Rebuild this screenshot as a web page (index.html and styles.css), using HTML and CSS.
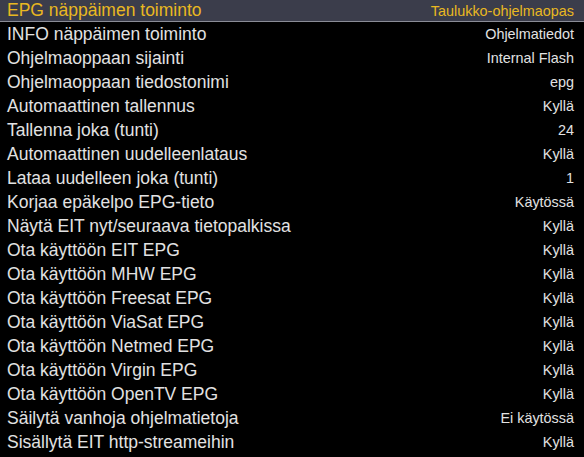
FILE: index.html
```html
<!DOCTYPE html>
<html>

<head>
    <meta name="viewport" content="width=device-width, initial-scale=1.0">
    <link rel="stylesheet" href="styles.css">
</head>

<body>
    <div class="menu">
        <div class="row selected"><span class="label">EPG näppäimen toiminto</span><span class="value">Taulukko-ohjelmaopas</span></div>
        <div class="row"><span class="label">INFO näppäimen toiminto</span><span class="value">Ohjelmatiedot</span></div>
        <div class="row"><span class="label">Ohjelmaoppaan sijainti</span><span class="value">Internal Flash</span></div>
        <div class="row"><span class="label">Ohjelmaoppaan tiedostonimi</span><span class="value">epg</span></div>
        <div class="row"><span class="label">Automaattinen tallennus</span><span class="value">Kyllä</span></div>
        <div class="row"><span class="label">Tallenna joka (tunti)</span><span class="value">24</span></div>
        <div class="row"><span class="label">Automaattinen uudelleenlataus</span><span class="value">Kyllä</span></div>
        <div class="row"><span class="label">Lataa uudelleen joka (tunti)</span><span class="value">1</span></div>
        <div class="row"><span class="label">Korjaa epäkelpo EPG-tieto</span><span class="value">Käytössä</span></div>
        <div class="row"><span class="label">Näytä EIT nyt/seuraava tietopalkissa</span><span class="value">Kyllä</span></div>
        <div class="row"><span class="label">Ota käyttöön EIT EPG</span><span class="value">Kyllä</span></div>
        <div class="row"><span class="label">Ota käyttöön MHW EPG</span><span class="value">Kyllä</span></div>
        <div class="row"><span class="label">Ota käyttöön Freesat EPG</span><span class="value">Kyllä</span></div>
        <div class="row"><span class="label">Ota käyttöön ViaSat EPG</span><span class="value">Kyllä</span></div>
        <div class="row"><span class="label">Ota käyttöön Netmed EPG</span><span class="value">Kyllä</span></div>
        <div class="row"><span class="label">Ota käyttöön Virgin EPG</span><span class="value">Kyllä</span></div>
        <div class="row"><span class="label">Ota käyttöön OpenTV EPG</span><span class="value">Kyllä</span></div>
        <div class="row"><span class="label">Säilytä vanhoja ohjelmatietoja</span><span class="value">Ei käytössä</span></div>
        <div class="row"><span class="label">Sisällytä EIT http-streameihin</span><span class="value">Kyllä</span></div>
    </div>
</body>

</html>
```

FILE: styles.css
```css
html,
body {
    margin: 0;
    background-color: black;
}

body {
    font-family: "Liberation Sans", Arial, sans-serif;
    color: #e2e2e2;
}

.menu {
    display: flex;
    flex-direction: column;
}

.row {
    display: flex;
    justify-content: space-between;
    align-items: center;
    height: 24px;
    padding: 0 10px 0 7px;
}

.selected {
    height: 21px;
    margin-top: -2px;
    padding-top: 2px;
    background-color: #3b3d4b;
    border-bottom: 1px solid #8a8c96;
    color: #e9b821;
}

.label {
    font-size: 17.5px;
}

.value {
    font-size: 14.4px;
}
```
